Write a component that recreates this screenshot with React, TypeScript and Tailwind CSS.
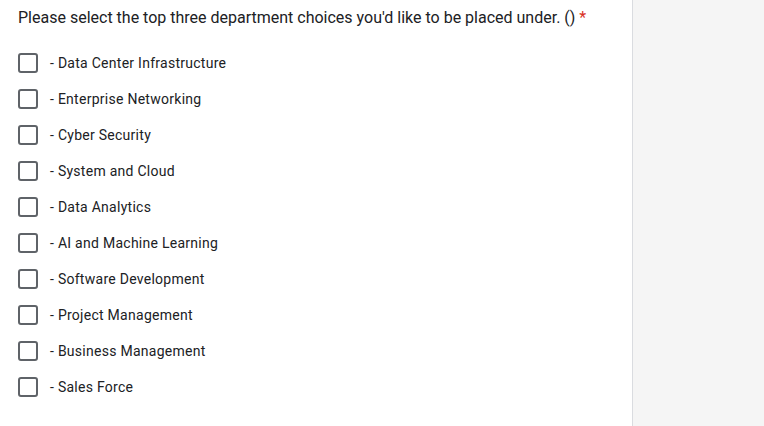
import React from "react";

const items = [
  "- Data Center Infrastructure",
  "- Enterprise Networking",
  "- Cyber Security",
  "- System and Cloud",
  "- Data Analytics",
  "- AI and Machine Learning",
  "- Software Development",
  "- Project Management",
  "- Business Management",
  "- Sales Force",
];

export default function App() {
  return (
    <div className="flex h-[426px] w-[764px] bg-[#f5f5f5]" style={{ fontFamily: "Roboto, sans-serif" }}>
      <div className="w-[633px] shrink-0 border-r border-[#dadce0] bg-white pl-[18px] pt-[6px]">
        <div className="text-[16px] leading-[24px] text-[#202124]">
          Please select the top three department choices you'd like to be placed under. () <span className="text-[#d93025]">*</span>
        </div>
        <div className="mt-[15px] flex flex-col">
          {items.map((t) => (
            <label key={t} className="flex h-[36px] items-center">
              <span className="h-[20px] w-[20px] rounded-[3px] border-2 border-[#5f6368]" />
              <span className="ml-[12px] text-[14px] tracking-[0.27px] text-[#202124]">{t}</span>
            </label>
          ))}
        </div>
      </div>
    </div>
  );
}
